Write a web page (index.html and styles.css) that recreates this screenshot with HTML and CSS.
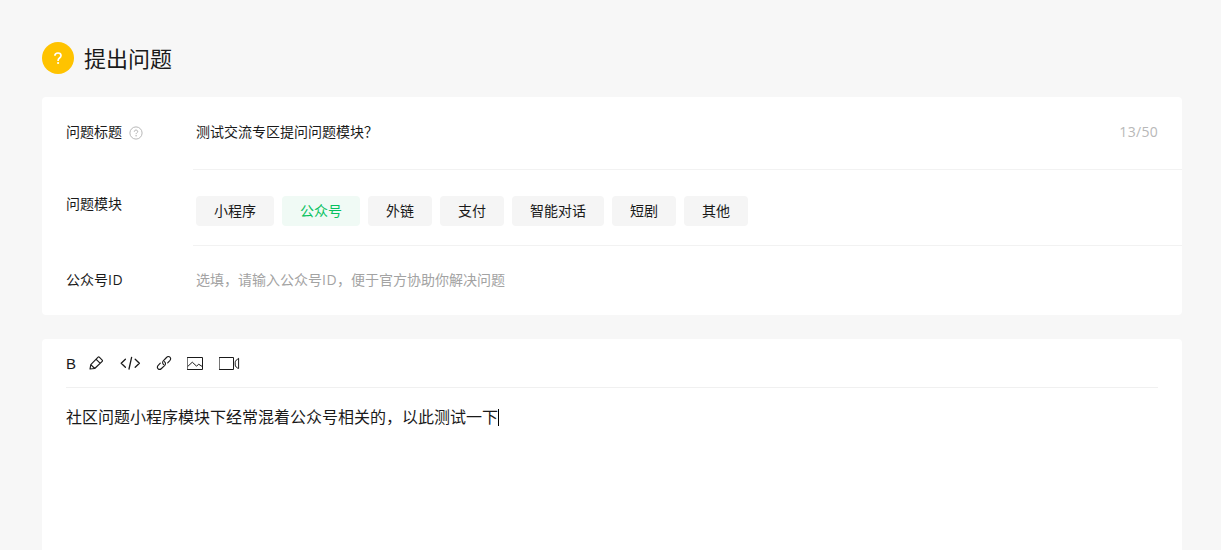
FILE: index.html
```html
<!DOCTYPE html>
<html lang="zh-CN">
<head>
<meta charset="utf-8">
<title>提出问题</title>
<link rel="stylesheet" href="styles.css">
</head>
<body>
<main class="page">
  <header class="page-header">
    <svg class="badge" viewBox="0 0 32 32" fill="none"><circle cx="16" cy="16" r="16" fill="#ffc300"/><path d="M12.9 13.7c0-1.7 1.3-2.7 3.1-2.7s3 1 3 2.5c0 1.2-.6 1.8-1.5 2.5-1 .7-1.4 1.2-1.4 2.4v.5" stroke="#fff" stroke-width="1.7"/><circle cx="16.1" cy="21" r="1.1" fill="#fff"/></svg>
    <h1 class="title">提出问题</h1>
  </header>
  <form class="card form">
    <div class="row row-title">
      <label class="label">问题标题
        <svg class="help" viewBox="0 0 14 14" fill="none"><circle cx="7" cy="7" r="6.1" stroke="#b8b8b8"/><path d="M5.3 5.7c0-1 .7-1.6 1.7-1.6s1.7.6 1.7 1.5c0 1.1-1.6 1.2-1.6 2.5" stroke="#b0b0b0"/><circle cx="7.1" cy="9.8" r=".7" fill="#b0b0b0"/></svg>
      </label>
      <div class="field"><span>测试交流专区提问问题模块？</span><span class="counter">13/50</span></div>
    </div>
    <div class="row row-module">
      <label class="label">问题模块</label>
      <div class="field tags">
        <span class="tag">小程序</span><span class="tag tag-active">公众号</span><span class="tag">外链</span><span class="tag">支付</span><span class="tag">智能对话</span><span class="tag">短剧</span><span class="tag">其他</span>
      </div>
    </div>
    <div class="row row-id">
      <label class="label"><span>公众号<span class="latin">ID</span></span></label>
      <div class="field placeholder"><span>选填，请输入公众号<span class="latin">ID</span>，便于官方协助你解决问题</span></div>
    </div>
  </form>
  <section class="card editor">
    <div class="toolbar">
      <span class="bold">B</span>
      <svg class="icon pencil" viewBox="0 0 16 16"><path d="M2 14 2.8 9.6 10.1 2.2Q10.7 1.6 11.3 2.2L14.2 5.1Q14.8 5.7 14.2 6.3L6.7 13.5ZM8.2 4.3 12 8.2M2.8 9.6 6.7 13.5"/></svg>
      <svg class="icon code" viewBox="0 0 22 16"><path d="M6.4 4.2 2.2 8.2 6.4 12.2M16.2 4.2 20.4 8.2 16.2 12.2M12.6 2.3 10 14"/></svg>
      <svg class="icon link" viewBox="0 0 16 16"><path d="M7.6 9.5C6.4 8.6 6.3 7 7.3 5.9L10.5 2.5C11.6 1.4 13 1.3 13.9 2.2S14.8 4.5 13.8 5.6L11.7 7.8M8.5 6.7C9.7 7.6 9.8 9.2 8.8 10.3L5.5 13.5C4.4 14.6 3 14.7 2.1 13.8S1.2 11.5 2.2 10.4L4.3 8.2"/></svg>
      <svg class="icon image" viewBox="0 0 16 14"><path d="M.5 1.5h15v12H.5ZM1 10.2 5.3 6.2l4.3 4 2-2 3.5 2.2"/></svg>
      <svg class="icon video" viewBox="0 0 21 14"><path d="M.5 1.5h14v12H.5ZM19.6 2.8v9.7C17.6 12 16.2 10.2 16.2 9V6.2C16.2 5 17.6 3.2 19.6 2.8Z"/></svg>
    </div>
    <div class="content">社区问题小程序模块下经常混着公众号相关的，以此测试一下<span class="caret"></span></div>
  </section>
</main>
</body>
</html>
```
FILE: styles.css
```css
* { box-sizing: border-box; }
body {
  margin: 0;
  background: #f7f7f7;
  color: #1a1a1a;
  font: 14px/20px "Open Sans", "Noto Sans CJK SC", sans-serif;
}
.page { display: flex; flex-direction: column; width: 1140px; height: 550px; margin-left: 42px; padding-top: 42px; }
.page-header { display: flex; align-items: center; gap: 10px; height: 32px; margin-bottom: 23px; }
.badge { width: 32px; height: 32px; }
.title { margin: 0; font-size: 22px; line-height: 32px; font-weight: 400; }
.card { background: #fff; border-radius: 4px; }
.form { height: 218px; margin-bottom: 24px; }
.row { display: flex; padding-left: 24px; }
.label { display: flex; gap: 7px; width: 127px; padding-top: 25px; }
.help { width: 14px; height: 14px; margin-top: 4px; }
.field { flex: 1; padding: 25px 24px 0 3px; border-bottom: 1px solid #f2f2f2; display: flex; }
.row-title { height: 73px; }
.counter { margin-left: auto; color: #b8b8b8; letter-spacing: .3px; }
.row-module { height: 76px; }
.row-module .label { padding-top: 24px; }
.tags { gap: 8px; padding-top: 26px; }
.tag { height: 30px; padding: 5px 18px; border-radius: 4px; background: #f5f5f5; }
.tag-active { color: #07c160; background: #f0faf5; }
.row-id { height: 69px; }
.row-id .label, .row-id .field { padding-top: 24px; }
.latin { letter-spacing: .5px; }
.placeholder { color: #a3a3a3; border: 0; }
.editor { flex: 1; padding: 0 24px; border-radius: 4px 4px 0 0; }
.toolbar { display: flex; align-items: center; height: 49px; border-bottom: 1px solid #f0f0f0; }
.bold { width: 10px; padding-top: 1px; font: 15px/20px "Liberation Sans", sans-serif; margin-right: 12px; }
.icon { fill: none; stroke: #1a1a1a; stroke-width: 1; stroke-linejoin: round; stroke-linecap: round; }
.pencil { width: 16px; height: 16px; margin-right: 15px; stroke-width: 1.15; }
.code { width: 22px; height: 16px; margin-right: 15px; stroke-width: 1.3; }
.link { width: 16px; height: 16px; margin-right: 15px; stroke-width: 1.1; }
.image { width: 16px; height: 14px; margin-right: 16px; stroke-linejoin: miter; }
.video { width: 21px; height: 14px; stroke-linejoin: miter; }
.content { display: flex; align-items: center; padding-top: 17px; font-size: 16px; line-height: 24px; }
.caret { width: 1px; height: 17px; background: #000; }
```
